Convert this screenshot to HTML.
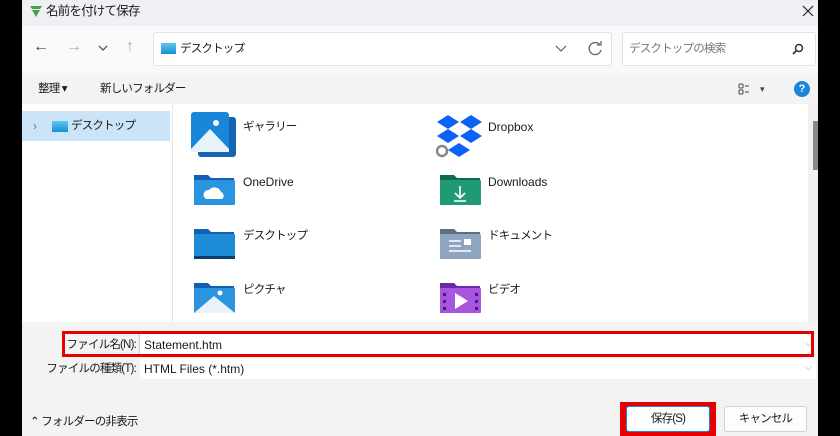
<!DOCTYPE html><html><head><meta charset="utf-8"><style>
*{margin:0;padding:0;box-sizing:border-box}
body{width:840px;height:436px;background:#000;position:relative;overflow:hidden;font-family:"Liberation Sans","Noto Sans CJK JP",sans-serif;font-size:12px;color:#1a1a1a}
.a{position:absolute}
.t{position:absolute;white-space:nowrap;line-height:14px}
.c{letter-spacing:-0.8px;font-size:11.5px}
</style></head><body>
<div class="a" style="left:22px;top:0;width:796px;height:436px;background:#f3f3f3"></div>
<div class="a" style="left:22px;top:0;width:796px;height:26px;background:#eef0f4"></div>
<svg class="a" style="left:29px;top:4px" width="14" height="14" viewBox="0 0 14 14"><path d="M1 2h12l-2 3H3z" fill="#4aa04a"/><path d="M3 6h8l-4 7z" fill="#4aa04a"/></svg>
<div class="t c" style="left:46px;top:4px;font-size:12.5px">名前を付けて保存</div>
<svg class="a" style="left:802px;top:5px" width="12" height="12"><path d="M1 1l10 10M11 1L1 11" stroke="#222" stroke-width="1.2"/></svg>
<div class="a" style="left:22px;top:26px;width:796px;height:47px;background:#f9f9f9"></div>
<div class="t" style="left:33px;top:40px;font-size:16px;color:#444">←</div>
<div class="t" style="left:66px;top:40px;font-size:16px;color:#aaa">→</div>
<svg class="a" style="left:98px;top:45px" width="10" height="6"><path d="M1 1l4 4 4-4" stroke="#444" fill="none" stroke-width="1.2"/></svg>
<div class="t" style="left:126px;top:40px;font-size:16px;color:#aaa">↑</div>
<div class="a" style="left:153px;top:32px;width:459px;height:34px;background:#fff;border:1px solid #e2e2e2;border-radius:3px"></div>
<div class="a" style="left:161px;top:43px;width:15px;height:11px;background:linear-gradient(#5ac8f0,#1a8fd0)"></div>
<div class="t c" style="left:180px;top:42px">デスクトップ</div>
<div class="t" style="left:240px;top:42px;color:#555">›</div>
<svg class="a" style="left:555px;top:45px" width="12" height="7"><path d="M1 1l5 5 5-5" stroke="#555" fill="none" stroke-width="1.1"/></svg>
<svg class="a" style="left:588px;top:41px" width="15" height="15" viewBox="0 0 15 15"><path d="M12 4A6 6 0 1 0 13 9" stroke="#666" fill="none" stroke-width="1.3"/><path d="M9 4h4V0" stroke="#666" fill="none" stroke-width="1.3"/></svg>
<div class="a" style="left:622px;top:32px;width:194px;height:34px;background:#fff;border:1px solid #e2e2e2;border-radius:3px"></div>
<div class="t c" style="left:629px;top:42px;color:#777">デスクトップの検索</div>
<svg class="a" style="left:792px;top:43px" width="12" height="12"><circle cx="7" cy="5" r="3.5" stroke="#333" fill="none" stroke-width="1.5"/><path d="M4.5 7.5L1 11" stroke="#333" stroke-width="1.8"/></svg>
<div class="t c" style="left:38px;top:82px">整理 ▾</div>
<div class="t c" style="left:100px;top:82px">新しいフォルダー</div>
<svg class="a" style="left:738px;top:83px" width="12" height="12"><rect x="1" y="1" width="4" height="4" rx="1" stroke="#444" fill="none"/><rect x="1" y="7" width="4" height="4" rx="1" stroke="#444" fill="none"/><path d="M7 3h4M7 9h4" stroke="#444"/></svg>
<div class="t" style="left:760px;top:82px;font-size:9px;color:#444">▾</div>
<div class="a" style="left:794px;top:81px;width:16px;height:16px;border-radius:50%;background:#1a86d9;color:#fff;font-size:11px;text-align:center;line-height:16px;font-weight:bold">?</div>
<div class="a" style="left:22px;top:104px;width:150px;height:218px;background:#fff"></div>
<div class="a" style="left:22px;top:111px;width:148px;height:30px;background:#cce4f7"></div>
<div class="t" style="left:33px;top:119px;color:#777">›</div>
<div class="a" style="left:52px;top:121px;width:16px;height:11px;background:linear-gradient(#5ac8f0,#1a8fd0)"></div>
<div class="t c" style="left:71px;top:119px">デスクトップ</div>
<div class="a" style="left:172px;top:104px;width:1px;height:218px;background:#e5e5e5"></div>
<div class="a" style="left:173px;top:104px;width:635px;height:218px;background:#fff"></div>
<div class="a" style="left:808px;top:104px;width:10px;height:218px;background:#f0f0f0"></div>
<div class="a" style="left:813px;top:121px;width:5px;height:49px;background:#888"></div>
<svg class="a" style="left:190px;top:111px" width="50" height="48" viewBox="0 0 50 48"><rect x="8" y="6" width="38" height="40" rx="3" fill="#1565b5"/><rect x="1" y="1" width="38" height="40" rx="3" fill="#1a86d9"/><path d="M1 38L20 18 39 38v3H1z" fill="#e8f2fb"/><circle cx="26" cy="12" r="3" fill="#fff"/></svg>
<div class="t c" style="left:243px;top:120px">ギャラリー</div>
<svg class="a" style="left:436px;top:112px" width="48" height="46" viewBox="0 0 48 46"><path d="M12 3l11 7-11 7L1 10zM35 3l11 7-11 7-11-7zM12 17l11 7-11 7L1 24zM35 17l11 7-11 7-11-7zM23 31l11 7-11 7-11-7z" fill="#0b62f4"/><circle cx="6" cy="39" r="5" fill="#fff" stroke="#888" stroke-width="2.5"/></svg>
<div class="t" style="left:488px;top:120px">Dropbox</div>
<svg class="a" style="left:194px;top:172px" width="42" height="33"><path d="M0 3h14l3 3h23v27H0z" fill="#1160b3"/><rect x="0" y="8" width="41" height="25" rx="1" fill="#2a94e0"/><path d="M10 25a5 5 0 0 1 5-7 7 7 0 0 1 12 2 4 4 0 0 1 1 7H12z" fill="#fff"/></svg>
<div class="t" style="left:243px;top:175px">OneDrive</div>
<svg class="a" style="left:440px;top:172px" width="42" height="33"><path d="M0 3h14l3 3h23v27H0z" fill="#0f6b4e"/><rect x="0" y="8" width="41" height="25" rx="1" fill="#1f9a74"/><path d="M20 14v12M15 21l5 5 5-5M14 29h12" stroke="#fff" stroke-width="1.6" fill="none"/></svg>
<div class="t" style="left:488px;top:175px">Downloads</div>
<svg class="a" style="left:194px;top:226px" width="42" height="33"><path d="M0 3h14l3 3h23v27H0z" fill="#1160b3"/><rect x="0" y="8" width="41" height="25" rx="1" fill="#1d8bd6"/><rect x="0" y="30" width="41" height="3" fill="#0b3e6e"/></svg>
<div class="t c" style="left:243px;top:229px">デスクトップ</div>
<svg class="a" style="left:440px;top:226px" width="42" height="33"><path d="M0 3h14l3 3h23v27H0z" fill="#5a6f86"/><rect x="0" y="8" width="41" height="25" rx="1" fill="#8ea4bf"/><path d="M9 15h12M9 20h12M9 25h22" stroke="#fff" stroke-width="1.6"/><rect x="24" y="13" width="7" height="6" fill="#fff"/></svg>
<div class="t c" style="left:488px;top:229px">ドキュメント</div>
<svg class="a" style="left:194px;top:280px" width="42" height="33"><path d="M0 3h14l3 3h23v27H0z" fill="#1160b3"/><rect x="0" y="8" width="41" height="25" rx="1" fill="#2a94e0"/><path d="M0 33L20 16 41 33z" fill="#e8f2fb"/><circle cx="26" cy="13" r="2.5" fill="#fff"/></svg>
<div class="t c" style="left:243px;top:283px">ピクチャ</div>
<svg class="a" style="left:440px;top:280px" width="42" height="33"><path d="M0 3h14l3 3h23v27H0z" fill="#6a2aa8"/><rect x="0" y="8" width="41" height="25" rx="1" fill="#a855e0"/><path d="M15 13v16l13-8z" fill="#fff"/><rect x="3" y="13" width="3" height="3" fill="#4a1a7a"/><rect x="3" y="20" width="3" height="3" fill="#4a1a7a"/><rect x="3" y="27" width="3" height="3" fill="#4a1a7a"/><rect x="35" y="13" width="3" height="3" fill="#4a1a7a"/><rect x="35" y="20" width="3" height="3" fill="#4a1a7a"/><rect x="35" y="27" width="3" height="3" fill="#4a1a7a"/></svg>
<div class="t c" style="left:488px;top:283px">ビデオ</div>
<div class="a" style="left:140px;top:334px;width:674px;height:21px;background:#fff"></div>
<div class="a" style="left:62px;top:331px;width:752px;height:26px;border:3px solid #e60000"></div>
<div class="a" style="left:139px;top:334px;width:1px;height:20px;background:#ccc"></div>
<div class="t c" style="left:56px;top:338px;width:80px;text-align:right">ファイル名(N):</div>
<div class="t" style="left:144px;top:338px">Statement.htm</div>
<div class="t" style="left:805px;top:336px;color:#999;font-size:9px">⌵</div>
<div class="a" style="left:140px;top:359px;width:676px;height:20px;background:#fff"></div>
<div class="t c" style="left:30px;top:362px;width:106px;text-align:right">ファイルの種類(T):</div>
<div class="t" style="left:144px;top:362px">HTML Files (*.htm)</div>
<div class="t" style="left:805px;top:360px;color:#999;font-size:9px">⌵</div>
<div class="t c" style="left:30px;top:415px">⌃ フォルダーの非表示</div>
<div class="a" style="left:620px;top:402px;width:96px;height:34px;background:#e60000"></div>
<div class="a c" style="left:626px;top:406px;width:84px;height:26px;background:#fdfdfd;border:1px solid #1a86d9;border-radius:3px;text-align:center;line-height:24px">保存(S)</div>
<div class="a c" style="left:724px;top:406px;width:83px;height:26px;background:#fdfdfd;border:1px solid #d0d0d0;border-radius:3px;text-align:center;line-height:24px">キャンセル</div>
</body></html>
